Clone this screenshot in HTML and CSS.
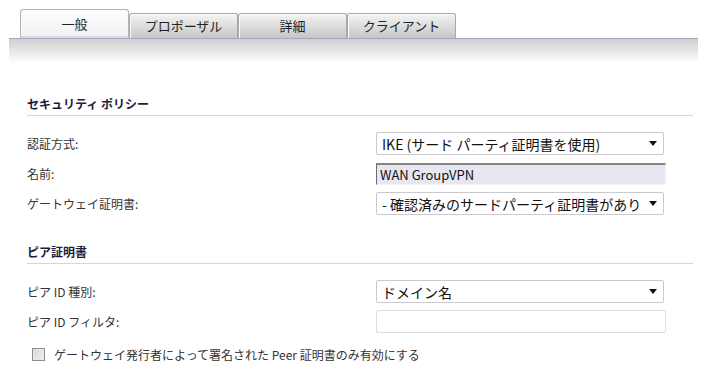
FILE: index.html
```html
<!DOCTYPE html>
<html lang="ja">
<head>
    <meta charset="UTF-8">
    <title>VPN ポリシー</title>
    <link rel="stylesheet" href="styles.css">
</head>
<body>
    <div class="tabs">
        <div class="tab active">一般</div>
        <div class="tab">プロポーザル</div>
        <div class="tab">詳細</div>
        <div class="tab">クライアント</div>
    </div>
    <div class="band"></div>

    <div class="form">
        <div class="section first">セキュリティ ポリシー</div>

        <div class="row">
            <label>認証方式:</label>
            <div class="select">
                <span class="value">IKE (サード パーティ証明書を使用)</span>
                <span class="arrow"></span>
            </div>
        </div>
        <div class="row">
            <label>名前:</label>
            <div class="input filled">WAN GroupVPN</div>
        </div>
        <div class="row">
            <label>ゲートウェイ証明書:</label>
            <div class="select">
                <span class="value">- 確認済みのサードパーティ証明書があり</span>
                <span class="arrow"></span>
            </div>
        </div>

        <div class="section">ピア証明書</div>

        <div class="row">
            <label>ピア ID 種別:</label>
            <div class="select">
                <span class="value">ドメイン名</span>
                <span class="arrow"></span>
            </div>
        </div>
        <div class="row">
            <label>ピア ID フィルタ:</label>
            <div class="input"></div>
        </div>

        <div class="check">
            <span class="box"></span>
            <span>ゲートウェイ発行者によって署名された Peer 証明書のみ有効にする</span>
        </div>
    </div>
</body>
</html>
```

FILE: styles.css
```css
* {
    margin: 0;
    padding: 0;
    box-sizing: border-box;
}

body {
    width: 705px;
    height: 390px;
    background: #fff;
    font-family: "Noto Sans CJK JP", "Noto Sans", sans-serif;
    font-size: 12px;
    color: #333;
    overflow: hidden;
}

/* タブ */
.tabs {
    display: flex;
    align-items: flex-end;
    padding: 9px 0 0 20px;
    height: 38px;
    position: relative;
    z-index: 2;
}

.tab {
    width: 109px;
    height: 25px;
    border: 1px solid #a8a8a8;
    border-bottom: none;
    border-radius: 3px 3px 0 0;
    background: linear-gradient(to bottom, #f4f4f4, #c6c6c6);
    box-shadow: inset 1px 1px 0 #fafafa;
    text-align: center;
    font-size: 13px;
    line-height: 24px;
    color: #222;
}

.tab.active {
    height: 29px;
    background: linear-gradient(to bottom, #fff, #f2f2f2);
    border-color: #b4b4b4;
    border-bottom: 2px solid #d6d9ea;
    line-height: 27px;
}

.band {
    margin-left: 9px;
    width: 689px;
    height: 25px;
    border-top: 1px solid #aaa6c0;
    background: linear-gradient(to bottom, #cfcfcf, #fff);
}

/* フォーム */
.form {
    padding: 0 12px 0 27px;
}

.section {
    margin-top: 28px;
    margin-bottom: 16px;
    padding-bottom: 3px;
    border-bottom: 1px solid #c9d9e8;
    font-weight: bold;
    color: #1c1c3c;
    line-height: 17px;
}

.section.first {
    margin-top: 32px;
}

.row {
    display: flex;
    align-items: center;
    height: 23px;
    margin-bottom: 7px;
}

.row label {
    width: 349px;
    flex-shrink: 0;
}

.select {
    width: 288px;
    height: 23px;
    border: 1px solid #c9c9cf;
    border-radius: 2px;
    background: #fff;
    display: flex;
    align-items: center;
    padding: 0 6px 0 5px;
    font-size: 14px;
    color: #111;
}

.select .value {
    flex: 1;
    white-space: nowrap;
    overflow: hidden;
}

.select .arrow {
    width: 0;
    height: 0;
    margin-left: 4px;
    border-left: 4px solid transparent;
    border-right: 4px solid transparent;
    border-top: 5px solid #111;
}

.input {
    width: 290px;
    height: 23px;
    border: 1px solid #dcdce2;
    border-radius: 2px;
    background: #fff;
    padding: 0 3px;
    font-size: 13px;
    line-height: 20px;
    color: #111;
}

.input.filled {
    height: 22px;
    background: #e7e7f1;
    border-radius: 0;
    border-top: 2px solid #858585;
    border-left: 1px solid #6c6c6c;
    border-right: 1px solid #f2f2f2;
    border-bottom: 1px solid #f2f2f2;
}

.check {
    display: flex;
    align-items: center;
    gap: 9px;
    margin-top: 13px;
    padding-left: 5px;
}

.check .box {
    width: 13px;
    height: 13px;
    border: 1px solid #8e8e8e;
    background: linear-gradient(135deg, #d4d4d4, #f4f4f4);
    box-shadow: inset 0 0 0 1px #e8e8e8;
}
```
